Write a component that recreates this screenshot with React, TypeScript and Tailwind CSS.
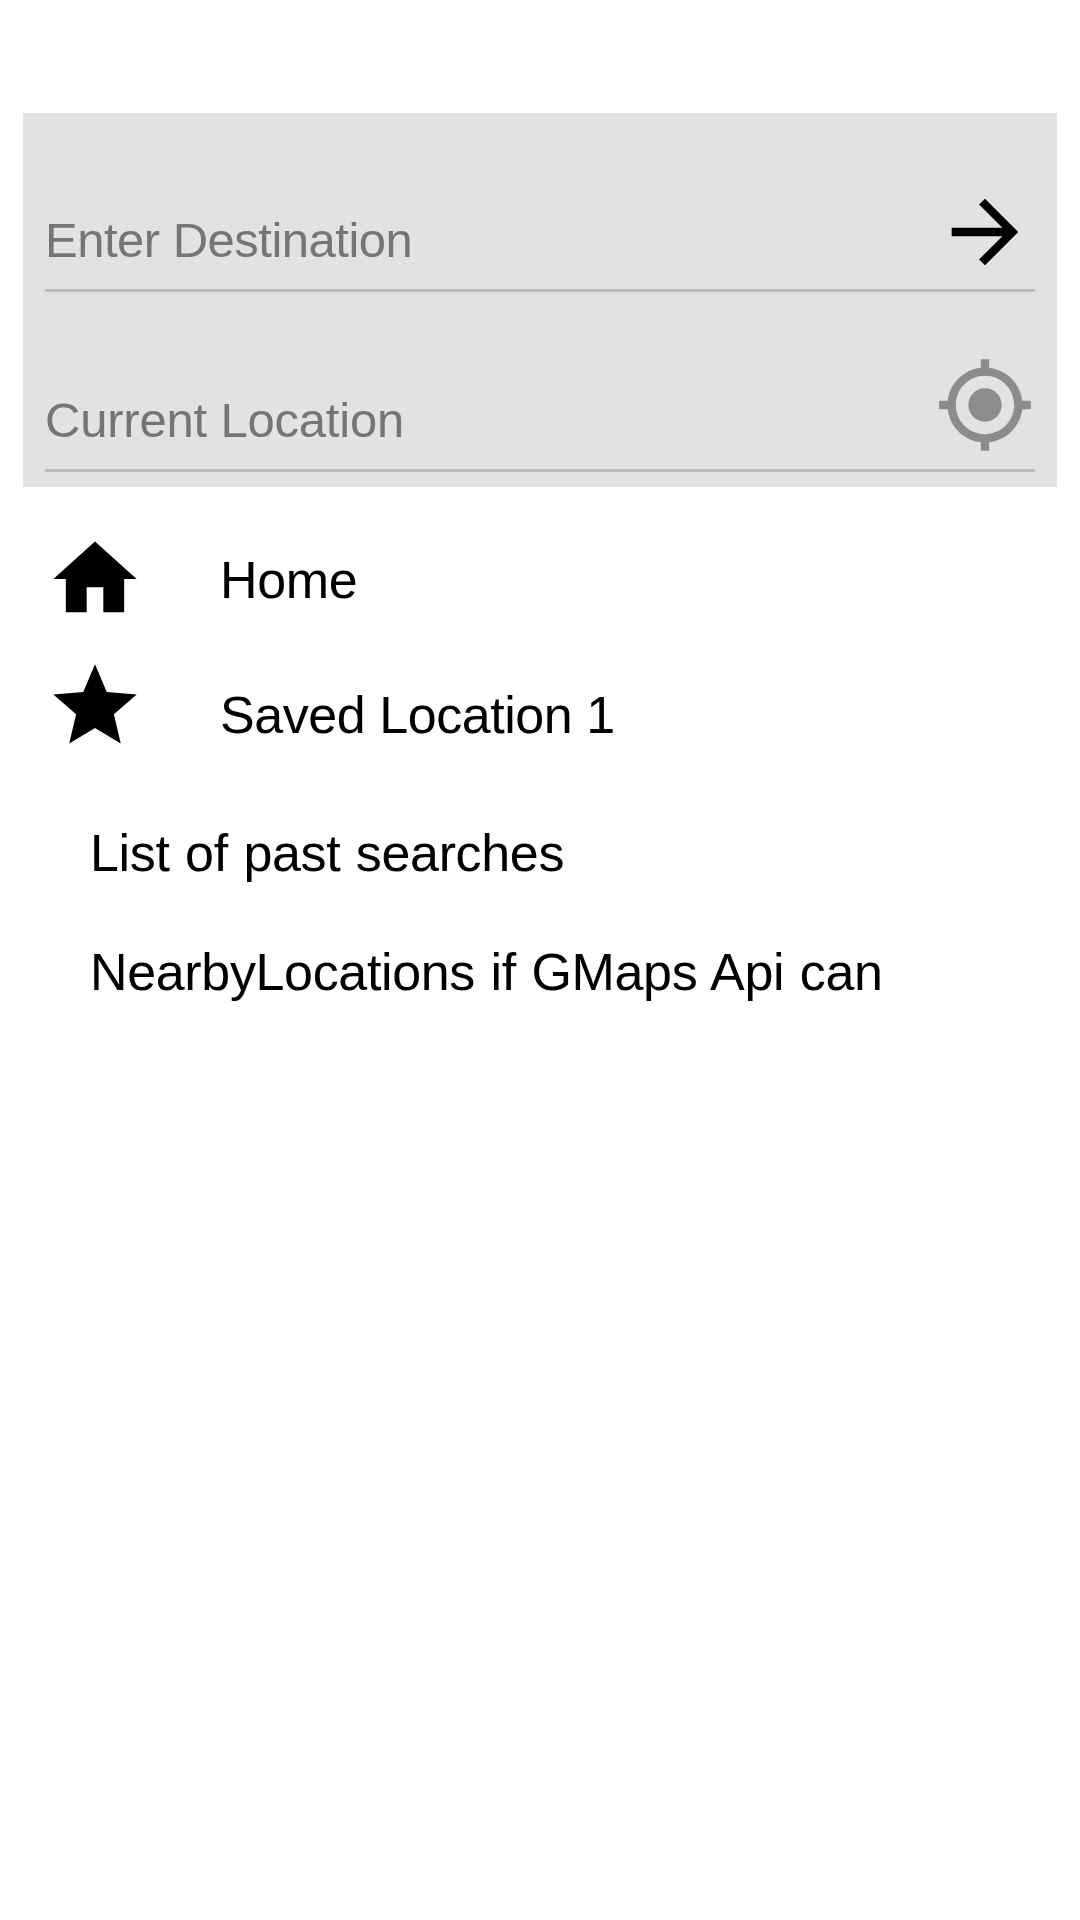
import type { ReactNode } from "react";

function Icon({ d, className }: { d: string; className: string }) {
  return (
    <svg viewBox="0 0 24 24" fill="currentColor" aria-hidden="true" className={`size-[100px] shrink-0 ${className}`}>
      <path d={d} />
    </svg>
  );
}

const arrowForward = "M12 4l-1.41 1.41L16.17 11H4v2h12.17l-5.58 5.59L12 20l8-8z";
const myLocation =
  "M12 8c-2.21 0-4 1.79-4 4s1.79 4 4 4 4-1.79 4-4-1.79-4-4-4zm8.94 3c-.46-4.17-3.77-7.48-7.94-7.94V1h-2v2.06C6.83 3.52 3.52 6.83 3.06 11H1v2h2.06c.46 4.17 3.77 7.48 7.94 7.94V23h2v-2.06c4.17-.46 7.48-3.77 7.94-7.94H23v-2h-2.06zM12 19c-3.87 0-7-3.13-7-7s3.13-7 7-7 7 3.13 7 7-3.13 7-7 7z";
const home = "M10 20v-6h4v6h5v-8h3L12 3 2 12h3v8z";
const star = "M12 17.27L18.18 21l-1.64-7.03L22 9.24l-7.19-.61L12 2 9.19 8.63 2 9.24l5.46 4.73L5.82 21z";

type FieldProps = { label: string; className: string; textClass: string; children: ReactNode };

function Field({ label, className, textClass, children }: FieldProps) {
  return (
    <div className={`flex h-[110px] items-start justify-between border-b-[3px] border-[#bbbbbb] ${className}`}>
      <span className={`mt-[28px] text-[49px] leading-[60px] text-[#757575] ${textClass}`}>{label}</span>
      {children}
    </div>
  );
}

type PlaceProps = { label: string; icon: string; className: string; textClass: string };

function Place({ label, icon, className, textClass }: PlaceProps) {
  return (
    <li className={`flex items-start gap-[75px] ${className}`}>
      <Icon d={icon} className="text-black" />
      <span className={textClass}>{label}</span>
    </li>
  );
}

export default function App() {
  return (
    <main className="flex min-h-[1920px] w-[1080px] flex-col bg-white pt-[113px] font-['Liberation_Sans',Arial,sans-serif] whitespace-nowrap">
      <section className="mx-[23px] h-[374px] bg-[#e2e2e2] px-[22px] pt-[69px]">
        <Field label="Enter Destination" className="" textClass="tracking-[-0.5px]">
          <Icon d={arrowForward} className="text-black" />
        </Field>
        <Field label="Current Location" className="mt-[70px]" textClass="tracking-[-0.2px]">
          <Icon d={myLocation} className="-mt-[7px] text-[#8c8c8c]" />
        </Field>
      </section>
      <ul className="mt-[42px] pl-[45px] text-[52px] leading-[60px] tracking-[-0.35px] text-black">
        <Place label="Home" icon={home} className="h-[127px]" textClass="mt-[21px]" />
        <Place label="Saved Location 1" icon={star} className="h-[167px]" textClass="mt-[29px] tracking-[-0.45px]" />
        <li className="mb-[59px] pl-[45px] [word-spacing:1.5px]">List of past searches</li>
        <li className="pl-[45px] [word-spacing:1.5px]">NearbyLocations if GMaps Api can</li>
      </ul>
    </main>
  );
}
